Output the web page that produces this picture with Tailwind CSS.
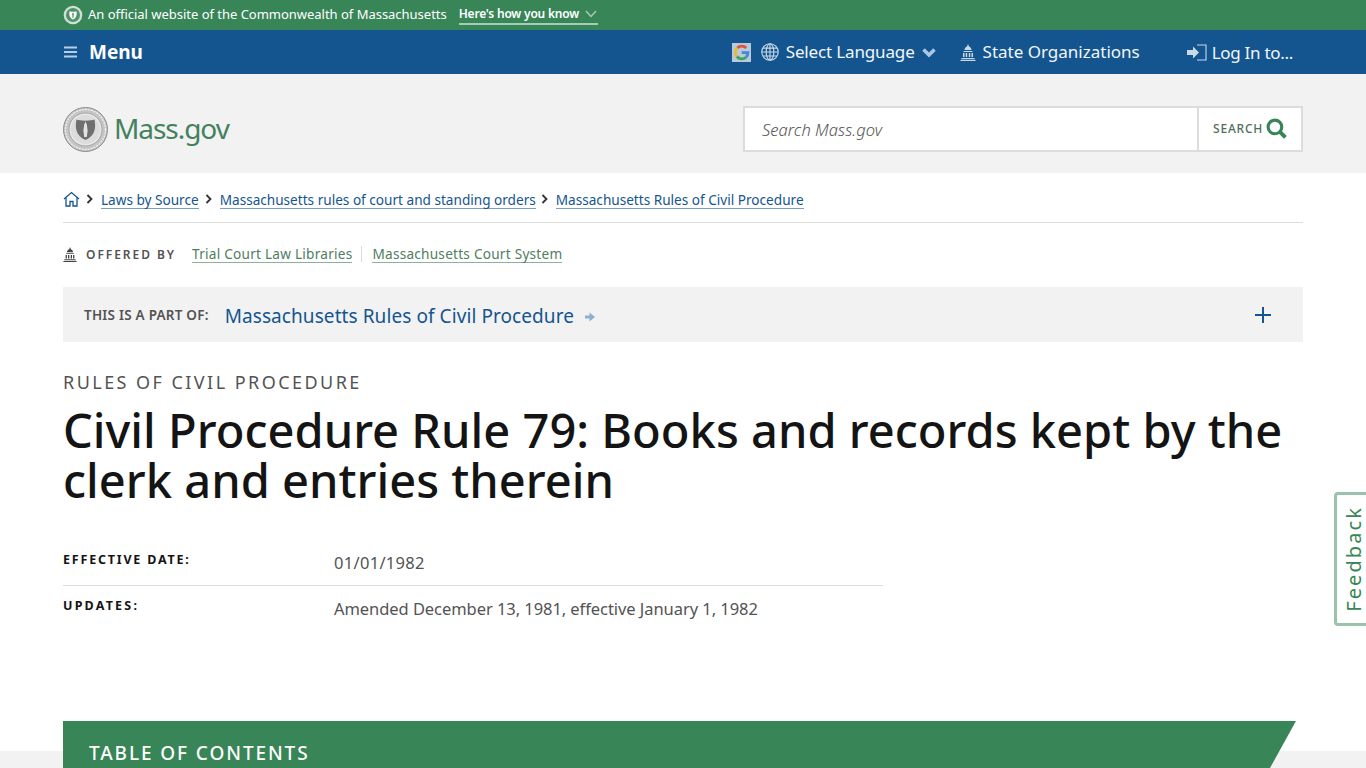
<!DOCTYPE html>
<html lang="en">
<head>
    <meta charset="UTF-8">
    <meta name="viewport" content="width=device-width, initial-scale=1.0">
    <title>Civil Procedure Rule 79 | Mass.gov</title>
    <script src="https://cdn.jsdelivr.net/npm/@tailwindcss/browser@4"></script>
</head>
<body class="bg-white font-['Noto_Sans',sans-serif] text-[#141414] h-[768px] overflow-hidden relative">

    <!-- Official banner -->
    <div class="bg-[#388557] h-[30px] px-[63px] flex items-center text-white">
        <svg class="w-5 h-5 shrink-0" viewBox="0 0 20 20">
            <circle cx="10" cy="10" r="9.300" fill="#cfe0d6"/>
            <circle cx="10" cy="10" r="7" fill="#4f9169"/>
            <path d="M6.500 6.200c2 .7 5 .7 7 0 .5 3.500 0 6.800-3.500 8.300-3.500-1.500-4-4.800-3.500-8.300z" fill="#fff"/>
            <path d="M10 7.500l1 1-.5 4.500h-1l-.5-4.500z" fill="#6c9c80"/>
        </svg>
        <span class="ml-[5px] text-[13px] tracking-[-0.02px]">An official website of the Commonwealth of Massachusetts</span>
        <a class="ml-3 text-[12px] font-semibold tracking-[-0.2px] h-[19px] leading-[18px] border-b-2 border-[#a5cdb5] flex items-center">Here's how you know
            <svg class="w-3 h-2 ml-[6px] mr-[1px]" viewBox="0 0 12 8" fill="none" stroke="#a5cdb5" stroke-width="1.500"><path d="M1 1l5 5.500L11 1"/></svg>
        </a>
    </div>

    <!-- Utility nav -->
    <div class="bg-[#14558f] h-[44px] px-[63px] flex items-center text-white">
        <svg class="w-[15px] h-3 shrink-0" viewBox="0 0 15 12" fill="none" stroke="#b5cfe8" stroke-width="1.800"><path d="M1 1.500h13M1 6h13M1 10.500h13"/></svg>
        <span class="ml-[11px] text-[19px] font-bold">Menu</span>

        <div class="ml-auto flex items-center text-[#f2f6fa]">
            <!-- Google translate mark -->
            <svg class="w-[19px] h-[19px] shrink-0" viewBox="0 0 19 19">
                <rect width="19" height="19" fill="#b8c9d8"/>
                <path d="M14.300 5A6.500 6.500 0 0 0 5.300 4.900" fill="none" stroke="#e0523f" stroke-width="2.800"/>
                <path d="M5.300 4.900A6.500 6.500 0 0 0 4.800 13.500" fill="none" stroke="#efb72e" stroke-width="2.800"/>
                <path d="M4.800 13.500a6.500 6.500 0 0 0 9.200 .8" fill="none" stroke="#3fa45b" stroke-width="2.800"/>
                <path d="M14 14.300A6.500 6.500 0 0 0 15.900 9.700H9.700" fill="none" stroke="#4a86d8" stroke-width="2.800"/>
            </svg>
            <svg class="w-[18px] h-[18px] ml-[10px] shrink-0" viewBox="0 0 16 16" fill="none" stroke="#c9d9e8" stroke-width="1">
                <circle cx="8" cy="8" r="7.300"/>
                <ellipse cx="8" cy="8" rx="3.400" ry="7.300"/>
                <path d="M8 .7v14.600M.7 8h14.600M1.700 4.500h12.600M1.700 11.500h12.600"/>
            </svg>
            <span class="ml-[7px] text-[17px] tracking-[-0.15px]">Select Language</span>
            <svg class="w-[14px] h-[11px] ml-[7px]" viewBox="0 0 14 11" fill="none" stroke="#a9c6e2" stroke-width="3.600"><path d="M1.500 2.500l5.500 5.500 5.500-5.500"/></svg>
            <svg class="w-4 h-[17px] ml-[24px]" viewBox="0 0 16 17" fill="#c9d9e8">
                <path d="M8 0l1 2.500c1.500.6 2.500 2 2.500 3.500h-7C4.500 4.500 5.500 3.100 7 2.500z"/>
                <path d="M3.500 7h9v1h-9zM3 9h1.500v4H3zM5.700 9h1.500v4H5.700zM8.800 9h1.500v4H8.800zM11.500 9H13v4h-1.500zM1.500 14h13v1h-13zM.5 15.800h15v1.200H.5z"/>
            </svg>
            <span class="ml-[7px] text-[17px]">State Organizations</span>
            <svg class="w-[20px] h-[17px] ml-[47px]" viewBox="0 0 20 17" fill="none">
                <path d="M0 6h6V2.500L12 8.500l-6 6V11H0z" fill="#c9d9e8"/>
                <path d="M10 1h9v15h-9" stroke="#c9d9e8" stroke-width="1.100"/>
            </svg>
            <span class="ml-[5px] text-[17px] tracking-[-0.3px] mr-[10px] translate-y-[1px]">Log In to...</span>
        </div>
    </div>

    <!-- Header -->
    <header class="bg-[#f2f2f2] h-[99px] px-[63px] pt-[10px] flex items-center justify-between">
        <a class="flex items-center">
            <svg class="w-[45px] h-[45px] shrink-0 translate-y-[1px]" viewBox="0 0 45 45">
                <circle cx="22.500" cy="22.500" r="22" fill="#c4c4c4" stroke="#8d8d8d"/>
                <circle cx="22.500" cy="22.500" r="20" fill="none" stroke="#efefef" stroke-width="1.300" stroke-dasharray="2 1"/>
                <circle cx="22.500" cy="22.500" r="16.500" fill="#e8e8e8" stroke="#9a9a9a" stroke-width=".8"/>
                <circle cx="22.500" cy="22.500" r="14.500" fill="#dcdcdc"/>
                <path d="M13.500 12.500c3 1.500 15 1.500 18 0 1.500 8 1 16-9 20.500C12.500 28.500 12 20.500 13.500 12.500z" fill="#6f6f6f"/>
                <path d="M22.500 14.500l1.300 3 .8 6-.8 6.500h-2.600l-.8-6.500.8-6z" fill="#e3e3e3"/>
            </svg>
            <span class="ml-[6px] text-[28px] leading-none text-[#44815e] tracking-[-1.050px] translate-y-[-1px]">Mass.gov</span>
        </a>
        <form class="flex w-[560px] h-[46px] border-2 border-[#dcdcdc] bg-white">
            <div class="flex-1 pl-[17px] flex items-center text-[16.500px] tracking-[0.05px] italic text-[#535353] font-light"><span class="translate-y-[2px]">Search Mass.gov</span></div>
            <div class="w-[104px] border-l-2 border-[#dcdcdc] flex items-center pl-[14px]">
                <span class="text-[12px] font-medium text-[#4f6f5c] tracking-[0.8px]">SEARCH</span>
                <svg class="w-[21px] h-[21px] ml-[3px]" viewBox="0 0 20 20" fill="none" stroke="#388557">
                    <circle cx="8.500" cy="8.500" r="6.500" stroke-width="3"/>
                    <path d="M13 13l5.500 5.500" stroke-width="3.800"/>
                </svg>
            </div>
        </form>
    </header>

    <main class="px-[63px]">
        <!-- Breadcrumbs -->
        <nav class="h-[50px] border-b border-[#dcdcdc] flex items-center text-[13.600px] text-[#14558f] pt-[5px]">
            <svg class="w-[17px] h-[16px] -translate-y-[1px]" viewBox="0 0 17 16" fill="none" stroke="#14558f" stroke-width="1.300">
                <path d="M1 8l7.500-6.500L16 8"/>
                <path d="M3 6.500V15h4v-4.500h3V15h4V6.500"/>
            </svg>
            <svg class="w-[8px] h-[10px] ml-[6px] -translate-y-[1px]" viewBox="0 0 8 10" fill="none" stroke="#333" stroke-width="1.800"><path d="M1.500 1l4 4-4 4"/></svg>
            <a class="ml-[7px] border-b border-[#7d9fbd] leading-[17px]">Laws by Source</a>
            <svg class="w-[8px] h-[10px] ml-[6px] -translate-y-[1px]" viewBox="0 0 8 10" fill="none" stroke="#333" stroke-width="1.800"><path d="M1.500 1l4 4-4 4"/></svg>
            <a class="ml-[7px] border-b border-[#7d9fbd] leading-[17px]">Massachusetts rules of court and standing orders</a>
            <svg class="w-[8px] h-[10px] ml-[5px] -translate-y-[1px]" viewBox="0 0 8 10" fill="none" stroke="#333" stroke-width="1.800"><path d="M1.500 1l4 4-4 4"/></svg>
            <a class="ml-[7px] border-b border-[#7d9fbd] leading-[17px]">Massachusetts Rules of Civil Procedure</a>
        </nav>

        <!-- Offered by -->
        <div class="h-[64px] flex items-center">
            <svg class="w-[14px] h-[15px] -translate-y-[1px]" viewBox="0 0 16 17" fill="#444">
                <path d="M8 0l1 2.500c1.500.6 2.500 2 2.500 3.500h-7C4.500 4.500 5.500 3.100 7 2.500z"/>
                <path d="M3.500 7h9v1h-9zM3 9h1.500v4H3zM5.700 9h1.500v4H5.700zM8.800 9h1.500v4H8.800zM11.500 9H13v4h-1.500zM1.500 14h13v1h-13zM.5 15.800h15v1.200H.5z"/>
            </svg>
            <span class="ml-[9px] text-[12px] font-semibold text-[#535353] tracking-[1.950px]">OFFERED BY</span>
            <a class="ml-[16px] text-[13.600px] text-[#4f7d62] tracking-[0.25px] border-b border-[#8fb09c] leading-[17px] -translate-y-[1px]">Trial Court Law Libraries</a>
            <span class="ml-[9px] h-[16px] border-l border-[#dcdcdc] -translate-y-[1px]"></span>
            <a class="ml-[10px] text-[13.600px] text-[#4f7d62] tracking-[0.25px] border-b border-[#8fb09c] leading-[17px] -translate-y-[1px]">Massachusetts Court System</a>
        </div>

        <!-- Part of bar -->
        <div class="bg-[#f2f2f2] h-[55px] pl-[21px] pr-[32px] flex items-center">
            <span class="text-[13.500px] font-semibold text-[#535353] tracking-[0.23px] translate-y-[1px]">THIS IS A PART OF:</span>
            <a class="ml-[16px] text-[19px] text-[#14558f] tracking-[0.08px] translate-y-[2px]">Massachusetts Rules of Civil Procedure</a>
            <svg class="w-[10px] h-[10px] ml-[11px] translate-y-[2px]" viewBox="0 0 10 10" fill="#8db0d0"><path d="M0 3.500h4.500V.5L10 5 4.500 9.500v-3H0z"/></svg>
            <svg class="w-4 h-4 ml-auto" viewBox="0 0 16 16" fill="none" stroke="#14558f" stroke-width="2"><path d="M8 0v16M0 8h16"/></svg>
        </div>

        <!-- Title -->
        <div class="mt-[29px] text-[18px] leading-[23px] text-[#535353] tracking-[2.450px]">RULES OF CIVIL PROCEDURE</div>
        <h1 class="mt-[11px] text-[47px] leading-[50px] font-medium tracking-[0.02px] w-[1240px]">Civil Procedure Rule 79: Books and records kept by the clerk and entries therein</h1>

        <!-- Details -->
        <div class="mt-[34px] w-[820px]">
            <div class="h-[47px] border-b border-[#dcdcdc] flex">
                <div class="w-[271px] text-[12.500px] font-bold tracking-[1.800px] pt-[12px] leading-[18px]">EFFECTIVE DATE:</div>
                <div class="text-[16.500px] text-[#535353] pt-[13px] leading-[22px] tracking-[0.3px]">01/01/1982</div>
            </div>
            <div class="flex">
                <div class="w-[271px] text-[12.500px] font-bold tracking-[2.200px] pt-[11px] leading-[18px]">UPDATES:</div>
                <div class="text-[16.500px] text-[#535353] pt-[12px] leading-[22px] tracking-[-0.06px]">Amended December 13, 1981, effective January 1, 1982</div>
            </div>
        </div>
    </main>

    <!-- Table of contents -->
    <section class="absolute left-0 right-0 top-[721px] h-[47px]">
        <div class="absolute left-0 right-0 top-[30px] bottom-0 bg-[#f2f2f2]"></div>
        <div class="absolute left-[63px] top-0 w-[1233px] h-[47px] bg-[#388557] [clip-path:polygon(0_0,100%_0,1207px_100%,0_100%)] pl-[26px] pt-[21px] text-white text-[19px] font-medium leading-[23px] tracking-[1.900px]">TABLE OF CONTENTS</div>
    </section>

    <!-- Feedback tab -->
    <a class="absolute right-0 top-[492px] w-[32px] h-[134px] border-[3px] border-r-0 border-[#9bc2aa] rounded-l-[4px] bg-white flex items-center justify-center overflow-hidden">
        <span class="[writing-mode:vertical-rl] rotate-180 text-[20px] text-[#388557] tracking-[2.100px] leading-none translate-x-[2px] whitespace-nowrap">Feedback</span>
    </a>

</body>
</html>
